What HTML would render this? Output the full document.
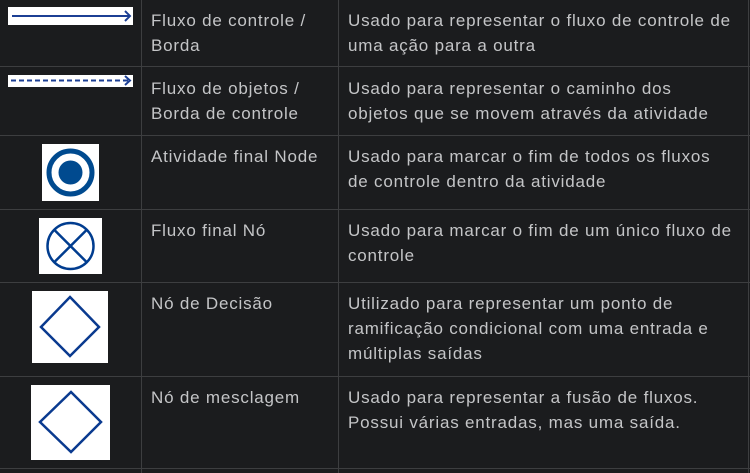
<!DOCTYPE html>
<html><head><meta charset="utf-8"><style>
body{margin:0;width:750px;height:473px;background:#1b1c1e;overflow:hidden;position:relative;font-family:"Liberation Sans",sans-serif;color:#c4c5c7;}
.h{position:absolute;left:0;width:750px;height:1px;background:#3d3e40}
.v{position:absolute;top:0;height:473px;width:1px;background:#3d3e40}
.t{position:absolute;font-size:17px;line-height:25px;white-space:nowrap;letter-spacing:0.8px}
svg{position:absolute}
</style></head><body>
<div class="h" style="top:66px"></div>
<div class="h" style="top:135px"></div>
<div class="h" style="top:209px"></div>
<div class="h" style="top:282px"></div>
<div class="h" style="top:376px"></div>
<div class="h" style="top:468px"></div>
<div class="v" style="left:141px"></div>
<div class="v" style="left:338px"></div>
<div class="v" style="left:748px"></div>

<svg style="left:8px;top:7px" width="125" height="18"><rect width="125" height="18" fill="#fff"/><line x1="4" y1="9" x2="122" y2="9" stroke="#1c3f94" stroke-width="2"/><path d="M117 4 L122 9 L117 14" fill="none" stroke="#1c3f94" stroke-width="2"/></svg>
<svg style="left:8px;top:75px" width="125" height="12"><rect width="125" height="12" fill="#fff"/><line x1="3" y1="5.5" x2="121" y2="5.5" stroke="#1c3f94" stroke-width="2" stroke-dasharray="5,3"/><path d="M117 1 L122 5.5 L117 10" fill="none" stroke="#1c3f94" stroke-width="2"/></svg>
<svg style="left:42px;top:144px" width="57" height="57"><rect width="57" height="57" fill="#fff"/><circle cx="28.5" cy="28.5" r="21.5" fill="none" stroke="#004a8f" stroke-width="5"/><circle cx="28.5" cy="28.5" r="12" fill="#004a8f"/></svg>
<svg style="left:39px;top:218px" width="63" height="56"><rect width="63" height="56" fill="#fff"/><circle cx="31.5" cy="28" r="23" fill="none" stroke="#003c8f" stroke-width="2.5"/><line x1="15.2" y1="11.7" x2="47.8" y2="44.3" stroke="#003c8f" stroke-width="2.5"/><line x1="47.8" y1="11.7" x2="15.2" y2="44.3" stroke="#003c8f" stroke-width="2.5"/></svg>
<svg style="left:32px;top:291px" width="76" height="72"><rect width="76" height="72" fill="#fff"/><path d="M38 6 L67 36 L38 65 L9 36 Z" fill="none" stroke="#0a3a8f" stroke-width="2.5"/></svg>
<svg style="left:31px;top:385px" width="79" height="75"><rect width="79" height="75" fill="#fff"/><path d="M40 7 L70 37 L40 67 L9 37 Z" fill="none" stroke="#0a3a8f" stroke-width="2.5"/></svg>

<div class="t" style="left:151px;top:8px">Fluxo de controle /<br>Borda</div>
<div class="t" style="left:151px;top:76px">Fluxo de objetos /<br>Borda de controle</div>
<div class="t" style="left:151px;top:144px">Atividade final Node</div>
<div class="t" style="left:151px;top:218px">Fluxo final Nó</div>
<div class="t" style="left:151px;top:291px">Nó de Decisão</div>
<div class="t" style="left:151px;top:385px">Nó de mesclagem</div>

<div class="t" style="left:348px;top:8px">Usado para representar o fluxo de controle de<br>uma ação para a outra</div>
<div class="t" style="left:348px;top:76px">Usado para representar o caminho dos<br>objetos que se movem através da atividade</div>
<div class="t" style="left:348px;top:144px">Usado para marcar o fim de todos os fluxos<br>de controle dentro da atividade</div>
<div class="t" style="left:348px;top:218px">Usado para marcar o fim de um único fluxo de<br>controle</div>
<div class="t" style="left:348px;top:291px">Utilizado para representar um ponto de<br>ramificação condicional com uma entrada e<br>múltiplas saídas</div>
<div class="t" style="left:348px;top:385px">Usado para representar a fusão de fluxos.<br>Possui várias entradas, mas uma saída.</div>
</body></html>
